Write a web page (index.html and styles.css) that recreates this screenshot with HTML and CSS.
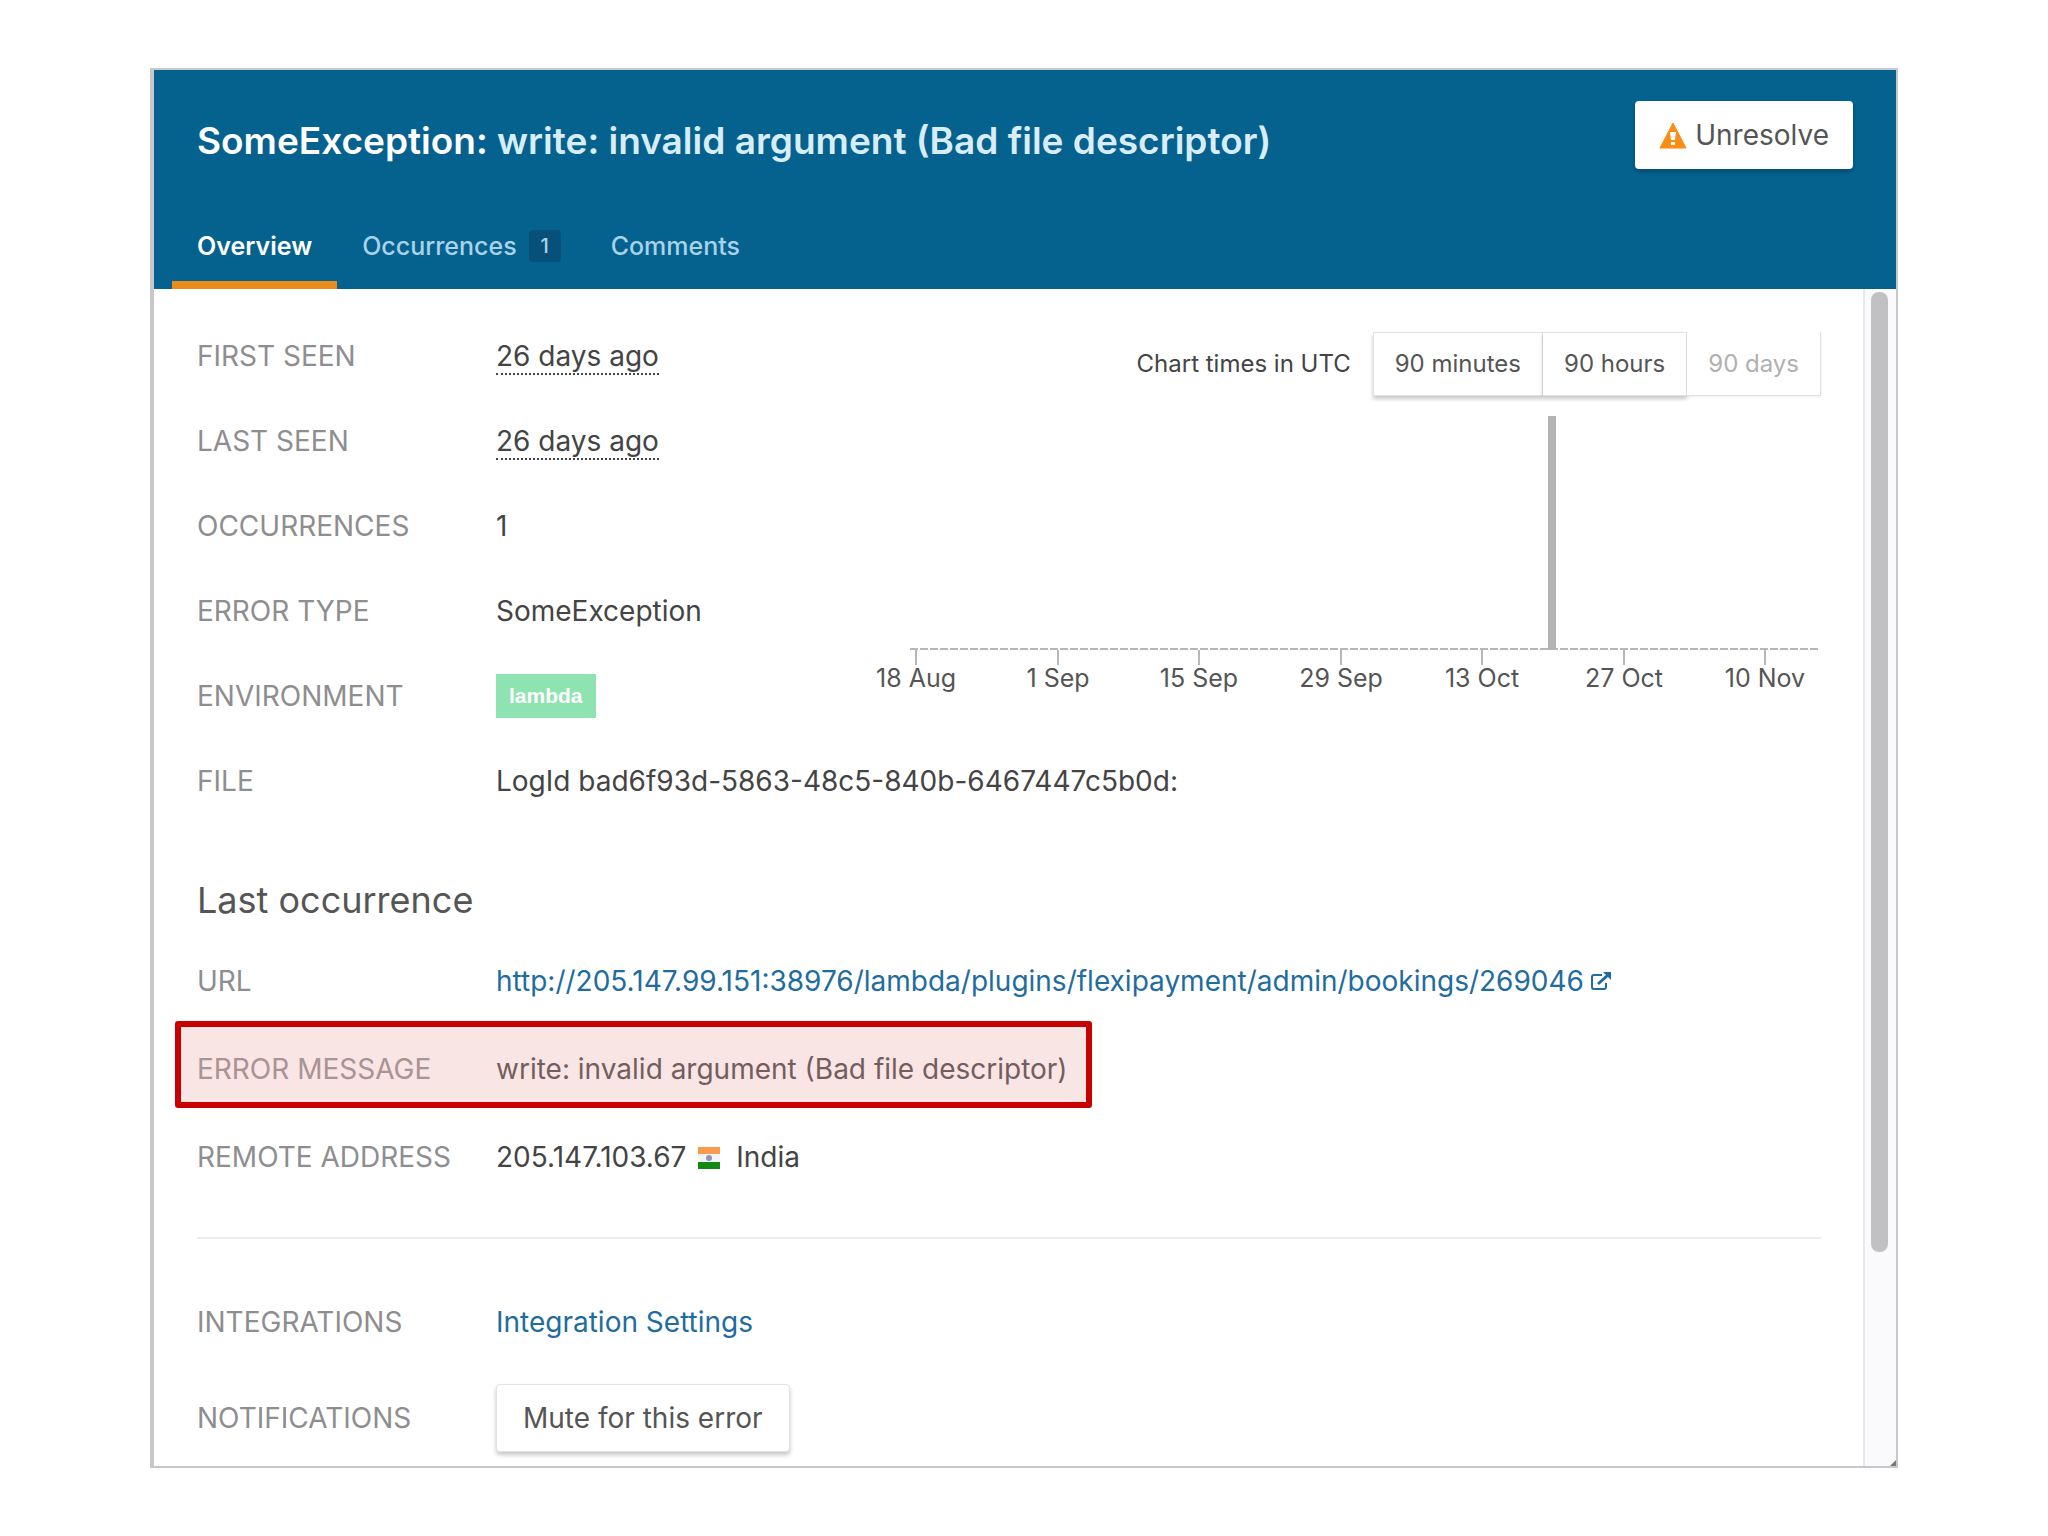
FILE: index.html
```
<!DOCTYPE html>
<html lang="en">
<head>
    <meta charset="UTF-8">
    <title>SomeException</title>
    <link rel="stylesheet" href="styles.css">
</head>
<body>
<main class="panel">
    <header class="head">
        <div class="head-top">
            <h1>SomeException: <span>write: invalid argument (Bad file descriptor)</span></h1>
            <button class="btn unresolve" type="button">
                <svg class="warn" viewBox="0 0 28 28" aria-hidden="true">
                    <path d="M14 2 27 27H1z" fill="#fb8c14" stroke="#fb8c14" stroke-width="1" stroke-linejoin="round"/>
                    <path d="M11 11h6l-1 8h-4zM12 21h4v3h-4z" fill="#fff"/>
                </svg>
                Unresolve
            </button>
        </div>
        <nav class="tabs">
            <a class="tab active" href="#overview">Overview</a>
            <a class="tab" href="#occurrences">Occurrences <span class="count">1</span></a>
            <a class="tab" href="#comments">Comments</a>
        </nav>
    </header>
    <div class="body">
        <div class="content" id="overview">
            <section class="chart">
                <div class="chart-bar">
                    <span>Chart times in UTC</span>
                    <div class="group">
                        <button class="btn" type="button">90 minutes</button>
                        <button class="btn" type="button">90 hours</button>
                        <button class="btn" type="button" disabled>90 days</button>
                    </div>
                </div>
                <svg class="plot" viewBox="0 0 950 290" role="img" aria-label="Occurrences per day">
                    <path class="axis" d="M39 243H947"/>
                    <path class="ticks" d="M45 244v15M187 244v15M328 244v15M470 244v15M611 244v15M753 244v15M894 244v15"/>
                    <path class="bar" d="M677 10h8v234h-8z"/>
                    <g class="dates">
                        <text x="45" y="281">18 Aug</text>
                        <text x="187" y="281">1 Sep</text>
                        <text x="328" y="281">15 Sep</text>
                        <text x="470" y="281">29 Sep</text>
                        <text x="611" y="281">13 Oct</text>
                        <text x="753" y="281">27 Oct</text>
                        <text x="894" y="281">10 Nov</text>
                    </g>
                </svg>
            </section>
            <dl class="list">
                <div class="row"><dt>FIRST SEEN</dt><dd><span class="time">26 days ago</span></dd></div>
                <div class="row"><dt>LAST SEEN</dt><dd><span class="time">26 days ago</span></dd></div>
                <div class="row"><dt>OCCURRENCES</dt><dd>1</dd></div>
                <div class="row"><dt>ERROR TYPE</dt><dd>SomeException</dd></div>
                <div class="row"><dt>ENVIRONMENT</dt><dd><span class="env">lambda</span></dd></div>
                <div class="row"><dt>FILE</dt><dd>LogId bad6f93d-5863-48c5-840b-6467447c5b0d:</dd></div>
            </dl>

            <h2>Last occurrence</h2>
            <dl class="list last">
                <div class="row">
                    <dt>URL</dt>
                    <dd>
                        <a href="http://205.147.99.151:38976/lambda/plugins/flexipayment/admin/bookings/269046">http://205.147.99.151:38976/lambda/plugins/flexipayment/admin/bookings/269046<svg class="ext" viewBox="0 0 22 20" aria-hidden="true">
                            <path d="M12 4H4Q2 4 2 6v10q0 2 2 2h10q2 0 2-2v-4" fill="none" stroke="currentColor" stroke-width="2"/>
                            <path d="M8 13 18 4" fill="none" stroke="currentColor" stroke-width="3"/>
                            <path d="M13 1h8v8z" fill="currentColor"/>
                        </svg></a>
                    </dd>
                </div>
                <div class="row marked"><dt>ERROR MESSAGE</dt><dd>write: invalid argument (Bad file descriptor)</dd></div>
                <div class="row">
                    <dt>REMOTE ADDRESS</dt>
                    <dd>
                        205.147.103.67
                        <svg class="flag" viewBox="0 0 22 22" aria-label="India flag">
                            <path d="M0 0h22v7H0z" fill="#f79a4b"/>
                            <path d="M0 7h22v8H0z" fill="#f4f4f4"/>
                            <path d="M0 15h22v7H0z" fill="#128a12"/>
                            <circle cx="11" cy="11" r="3" fill="#8f93bd"/>
                        </svg>
                        India
                    </dd>
                </div>
            </dl>
            <hr>
            <dl class="list settings">
                <div class="row"><dt>INTEGRATIONS</dt><dd><a href="#integrations">Integration Settings</a></dd></div>
                <div class="row"><dt>NOTIFICATIONS</dt><dd><button class="btn mute" type="button">Mute for this error</button></dd></div>
            </dl>
        </div>
        <div class="scroll"><div class="thumb"></div></div>
    </div>
</main>
</body>
</html>
```
FILE: styles.css
```
*{box-sizing:border-box;}
body{margin:0;padding:68px 150px;background:#fff;color:#444;font-family:Inter,"Liberation Sans",sans-serif;font-size:28px;line-height:36px;}
h1,h2,dl,dd{margin:0;}
a{color:#1f6c9f;text-decoration:none;}
.panel{border:2px solid #c8c8ca;border-left-width:4px;}

.head{background:#05628f;padding:31px 43px 0;}
.head-top{display:flex;justify-content:space-between;align-items:flex-start;}
h1{color:#fff;font-size:37px;line-height:44px;font-weight:600;margin-top:18px;}
h1 span{color:#d9edf8;}
.btn{font:inherit;color:#555;background:#fff;border:1px solid #e2e2e4;border-radius:4px;box-shadow:0 3px 4px rgba(0,0,0,.22);}
.unresolve{display:flex;align-items:center;gap:8px;height:68px;padding:0 24px;border:0;}
.warn{width:28px;height:28px;}
.tabs{display:flex;margin:34px -25px 0;}
.tab{display:flex;align-items:center;gap:12px;height:86px;padding:8px 25px 0;border-bottom:8px solid transparent;color:#a9d3ea;font-size:25px;font-weight:500;}
.tab.active{color:#fff;font-weight:600;border-color:#ea8c1c;}
.count{background:#07507a;border-radius:4px;width:32px;line-height:32px;font-size:20px;text-align:center;}

.body{display:flex;}
.content{flex:1;padding:24px 42px 0 43px;}
.row{display:flex;align-items:center;height:85px;}
.last .row{height:88px;}
.settings .row{height:96px;}
dt{flex:none;width:299px;color:#8e8e90;}
.time{border-bottom:2px dotted #444;}
.env{display:inline-block;padding:0 13px;line-height:44px;background:#8fe3b0;color:#fff;font-family:"Liberation Sans",sans-serif;font-size:21px;font-weight:700;}
h2{margin:57px 0 17px;color:#555;font-size:36px;line-height:40px;font-weight:400;}
.ext{width:22px;height:20px;margin-left:6px;}
.flag{width:22px;height:22px;margin:0 8px 0 4px;vertical-align:-2px;}
hr{margin:36px 0 35px;border:0;border-top:2px solid #ececee;}
.mute{height:68px;padding:0 26px;}

/* red frame over the row */
.marked{position:relative;width:fit-content;}
.marked:after{content:"";position:absolute;top:-4px;bottom:5px;left:-22px;right:-24px;border:6px solid #c80000;border-radius:3px;background:rgba(204,0,0,.1);}
.marked dt,.marked dd{opacity:.8;}

.chart{float:right;width:59%;max-width:950px;margin-top:19px;}
.chart-bar{display:flex;justify-content:flex-end;align-items:center;gap:22px;font-size:24px;}
.group{display:flex;}
.group .btn{height:64px;padding:0 21px;border-radius:0;}
.group .btn+.btn{border-left:0;}
.group .btn:disabled{color:#b0b0b2;box-shadow:0 1px 2px rgba(0,0,0,.08);border-top-color:transparent;}
.plot{display:block;width:100%;margin-top:10px;}
.axis{stroke:#b8b6b8;stroke-width:2;stroke-dasharray:8 2;}
.ticks{stroke:#b8b6b8;stroke-width:2;}
.bar{fill:#b5b3b5;}
.dates{fill:#555;font-size:25px;text-anchor:middle;}

.scroll{position:relative;width:33px;padding:3px 8px 3px 6px;border-left:2px solid #e9e8ea;background:#faf9fb;}
.scroll:after{content:"";position:absolute;right:0;bottom:0;border:3px solid #777;border-top-color:transparent;border-left-color:transparent;}
.thumb{height:960px;border-radius:8px;background:#c1c0c2;}
```
